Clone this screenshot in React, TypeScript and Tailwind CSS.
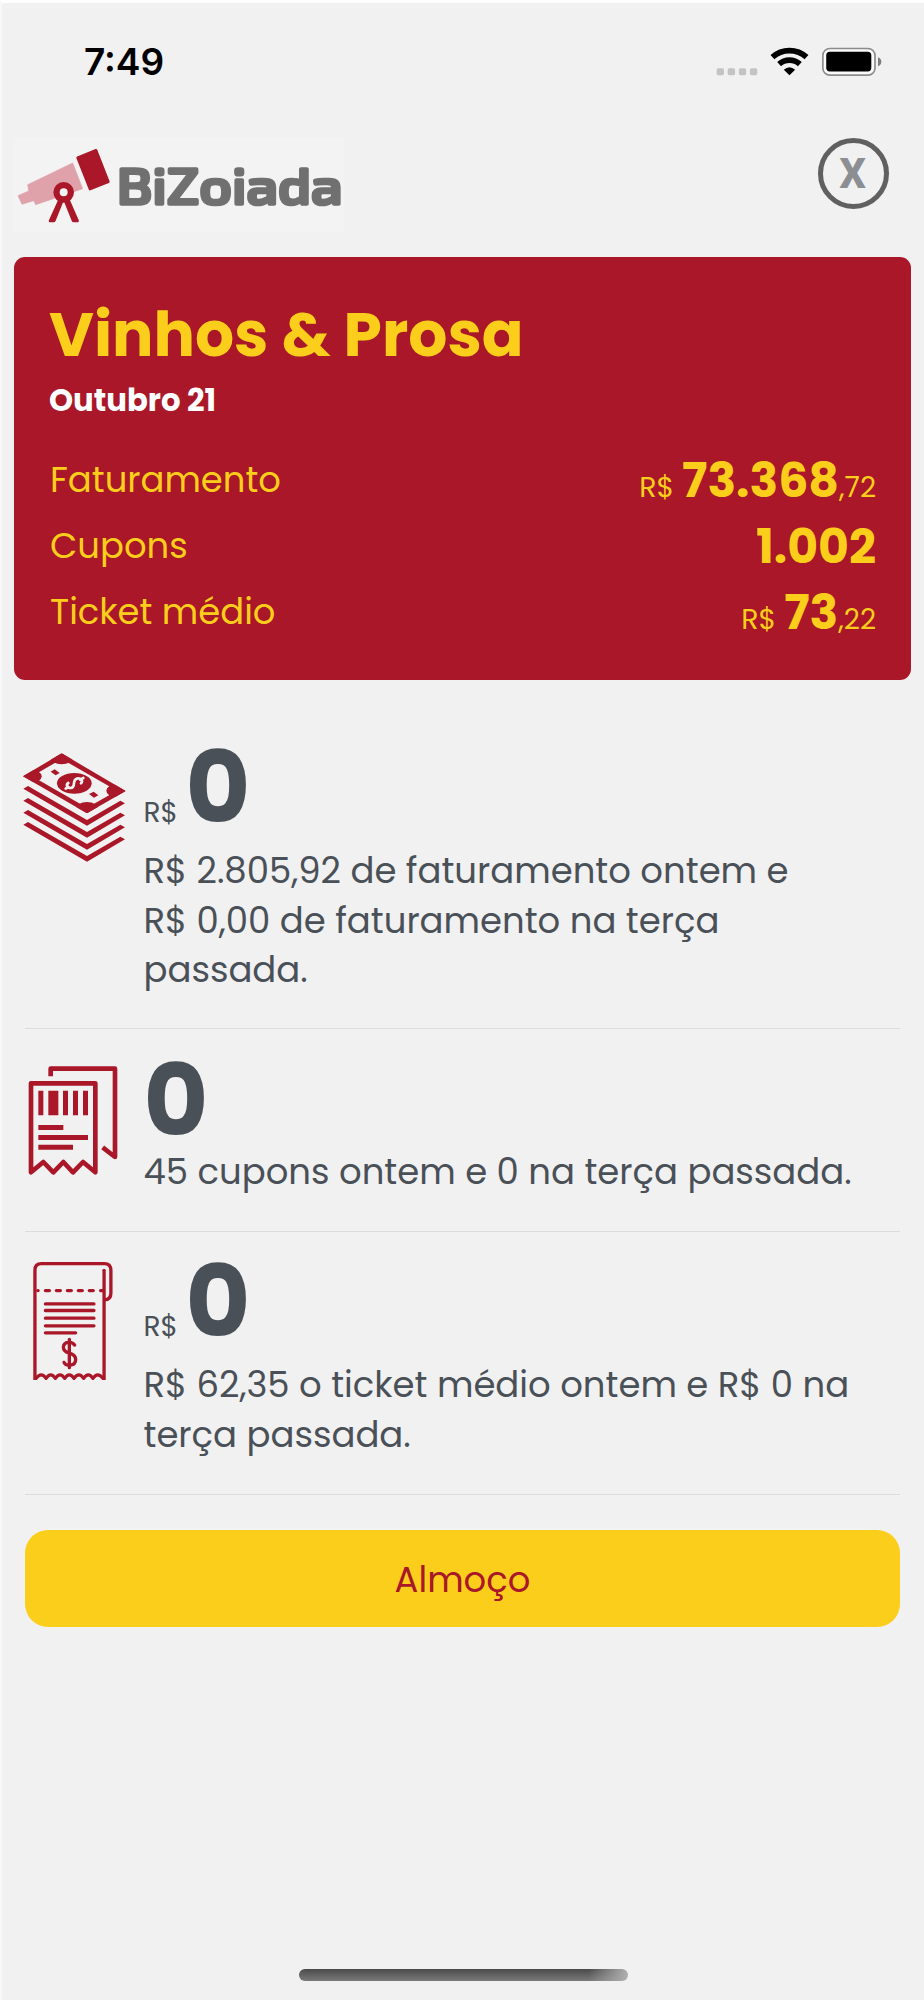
import type { ReactNode } from 'react';

const RED = '#a91729';
const PAGE = '#f1f1f1';

const Logo = () => (
  <svg viewBox="39 416 993 282" className="h-[94px] w-[331px] bg-[#f3f3f3]">
    {/* telescope */}
    <path
      d="M83 556 L218 491 L248 568 L107 616 L101 604 L66 615 L54 589 L86 575 Z"
      fill="#dfa2ab"
      stroke="#dfa2ab"
      strokeWidth="2"
      strokeLinejoin="round"
    />
    <path d="M233 475 L288 453 L325 547 L270 569 Z" fill={RED} stroke={RED} strokeWidth="8" strokeLinejoin="round" />
    <path
      d="M177 596 L146 664 Q146 669 150 669 H161 Q165 669 167 664 L191 604 L215 664 Q217 669 221 669 H232 Q238 669 236 662 L207 596 Z"
      fill={RED}
    />
    <circle cx="191" cy="579" r="21.5" fill="#f3f3f3" stroke={RED} strokeWidth="19" />
    {/* wordmark */}
    <text
      x="350"
      y="614"
      textLength="678"
      lengthAdjust="spacingAndGlyphs"
      className="font-['Exo_2',Inter,sans-serif] text-[149px] font-medium"
      fill="#707070"
      stroke="#707070"
      strokeWidth="11"
      strokeLinejoin="round"
    >
      BiZoiada
    </text>
  </svg>
);

const StatusIcons = () => (
  <svg viewBox="345 135 500 95" className="mb-[2px] h-[32px] w-[167px]">
    {/* signal */}
    {[350, 383, 416.5, 449.5].map((x) => (
      <rect key={x} x={x} y="204" width="22" height="21" rx="5" fill="#c3c3c3" />
    ))}
    {/* wifi */}
    <g fill="none" stroke="#000" strokeWidth="17">
      <path d="M517 171 A76 76 0 0 1 619 171" />
      <path d="M537 192 A46 46 0 0 1 599 192" />
    </g>
    <path d="M551 209 Q568 193 585 209 L568 225 Z" />
    {/* battery */}
    <rect x="668" y="145" width="156" height="80" rx="21" fill="#fafafa" stroke="#8c8c8c" strokeWidth="5" />
    <rect x="678" y="155" width="135" height="59" rx="11" />
    <path d="M833 171 Q843 175 843 184.500 Q843 194 833 198 Z" fill="#7d7d7d" />
  </svg>
);

const MoneyIcon = () => (
  <svg viewBox="68 98 309 327" className="mt-[17px] h-[109px] w-[103px]">
    <defs>
      <clipPath id="bill">
        <path d="M184 99 L376 212 L260 279 L68 168 Z" />
      </clipPath>
    </defs>
    <g clipPath="url(#bill)" fill={RED}>
      <rect x="68" y="98" width="309" height="182" />
      <path d="M184 116 L350 211 L260 262 L95 168 Z" fill={PAGE} />
      <ellipse cx="184" cy="111" rx="34" ry="21" />
      <ellipse cx="350" cy="211" rx="32" ry="20" />
      <ellipse cx="260" cy="266" rx="34" ry="21" />
      <ellipse cx="93" cy="168" rx="31" ry="19" />
      <ellipse cx="222" cy="189" rx="52" ry="31" />
      <path d="M151 154 L163 147 L178 158 L166 165 Z" />
      <path d="M266 221 L280 214 L294 225 L281 232 Z" />
    </g>
    <path
      d="M204 188 C196 193 200 203 211 203 C229 202 213 180 229 175 C242 172 249 182 242 189 M239 178 L249 173 M204 200 L196 205"
      fill="none"
      stroke={PAGE}
      strokeWidth="8"
      strokeLinecap="round"
    />
    {[0, 36, 72, 108].map((dy) => (
      <path
        key={dy}
        transform={`translate(0 ${dy})`}
        d="M69 205 L83 197 L260 299 L360 241 L374 249 L260 316 Z"
        fill={RED}
      />
    ))}
  </svg>
);

const CouponIcon = () => (
  <svg viewBox="84 140 270 327" className="ml-[5px] mt-[17px] h-[109px] w-[90px]">
    <g fill="none" stroke={RED} strokeWidth="14" strokeLinejoin="round">
      <path d="M93 459 V192 H286 V459 L249 428 L219 459 L190 428 L160 459 L130 428 Z" />
      <path d="M152 171 V148 H345 V413 L308 384" />
    </g>
    <path
      d="M115 214h15v74h-15z M145 214h30v74h-30z M189 214h15v74h-15z M219 214h15v74h-15z M249 214h15v74h-15z M115 317h75v15h-75z M115 347h149v15h-149z M115 376h104v15h-104z"
      fill={RED}
    />
  </svg>
);

const TicketIcon = () => (
  <svg viewBox="99 66 240 355" className="ml-[10px] mt-[12px] h-[118px] w-[80px]">
    <g fill="none" stroke={RED} strokeWidth="10" strokeLinecap="round" strokeLinejoin="round">
      <path d="M104.500 425 V91 Q104.500 71 124 71 H313 Q333 71 333 91 V160 Q333 179 314 180" />
      <path d="M312.500 91 V425" />
      <path d="M113 152h1 M136 152h12 M169 152h12 M202 152h12 M235 152h12 M268 152h12 M302 152h8" />
      <path d="M136 192H282 M136 212H282 M136 235H282 M136 258H282 M136 279H227" />
      <path d="M224 316 C217 304 191 304 190 322 C190 337 204 339 210 341 C222 345 227 350 227 359 C227 380 198 381 192 368 M208 299 V384" />
      <path d="M108 416 Q124 395 138 416 Q152 395 166 416 Q180 395 194 416 Q208 395 222 416 Q237 395 251 416 Q265 395 279 416 Q293 395 309 416" />
    </g>
  </svg>
);

interface SummaryRowProps {
  label: string;
  value: string;
  cents?: string;
}

const SummaryRow = ({ label, value, cents }: SummaryRowProps) => (
  <div className="flex h-[66px] items-center justify-between">
    <span className="pl-px pt-[2px] text-[35.400px]">{label}</span>
    <span className="flex items-baseline pt-[3px]">
      {cents && <span className="mr-[8px] text-[28.400px] leading-none">R$</span>}
      <span className="text-[47.400px] font-bold leading-[66px]">{value}</span>
      {cents && <span className="text-[28px] leading-none">{cents}</span>}
    </span>
  </div>
);

interface StatProps {
  icon: ReactNode;
  currency?: boolean;
  className: string;
  children: ReactNode;
}

const Stat = ({ icon, currency, className, children }: StatProps) => (
  <section className={`ml-[25px] mr-[24px] flex border-b border-[#dcdcdc] ${className}`}>
    <div className="-ml-[2px] w-[120.500px] shrink-0">{icon}</div>
    <div className="whitespace-nowrap text-[35.450px] leading-[49.700px]">
      <div className={`flex h-[98px] items-baseline ${currency ? 'mb-[12px]' : ''}`}>
        {currency && <span className="mr-[7.500px] text-[28px] leading-none">R$</span>}
        <span className="text-[99.500px] font-bold leading-[103px]">0</span>
      </div>
      {children}
    </div>
  </section>
);

const App = () => {
  return (
    <div className="flex h-[2000px] w-[924px] flex-col overflow-hidden border-l-2 border-l-[#f8f8f8] border-t-[3px] border-t-white bg-[#f1f1f1] font-[Poppins,Inter,sans-serif] text-[#495057]">
      <div className="-ml-[2px] flex grow flex-col">
        {/* Status bar */}
        <div className="flex h-[118px] items-center justify-between pl-[84px] pr-[42px]">
          <span className="font-[Inter,sans-serif] text-[37px] font-semibold text-black">7:49</span>
          <StatusIcons />
        </div>

        {/* Header */}
        <header className="mt-[17px] flex h-[94px] items-start justify-between pl-[13px] pr-[35px]">
          <Logo />
          <button className="flex size-[71px] items-center justify-center rounded-full border-[5px] border-[#606060] pr-[2px] font-[Roboto,sans-serif] text-[42px] font-extrabold text-[#8b8f94]">
            X
          </button>
        </header>

        {/* Monthly summary */}
        <div className="ml-[14px] mt-[25px] h-[423px] w-[897px] rounded-[11px] bg-[#a91729] px-[35px] pt-[48px] text-[#fcce1c]">
          <h1 className="text-[61.500px] font-bold leading-[60px]">Vinhos &amp; Prosa</h1>
          <p className="mt-[16px] text-[30.700px] font-bold leading-[40px] text-white">Outubro 21</p>
          <div className="mt-[25px]">
            <SummaryRow label="Faturamento" value="73.368" cents=",72" />
            <SummaryRow label="Cupons" value="1.002" />
            <SummaryRow label="Ticket médio" value="73" cents=",22" />
          </div>
        </div>

        {/* Today */}
        <Stat icon={<MoneyIcon />} currency className="h-[349px] pt-[56px]">
          <p>R$ 2.805,92 de faturamento ontem e</p>
          <p>R$ 0,00 de faturamento na terça</p>
          <p>passada.</p>
        </Stat>
        <Stat icon={<CouponIcon />} className="h-[203px] pt-[20px]">
          <p>45 cupons ontem e 0 na terça passada.</p>
        </Stat>
        <Stat icon={<TicketIcon />} currency className="h-[263px] pt-[18px]">
          <p>R$ 62,35 o ticket médio ontem e R$ 0 na</p>
          <p>terça passada.</p>
        </Stat>

        <button className="ml-[25px] mr-[24px] mt-[35px] h-[97px] rounded-[23px] bg-[#fcce1c] pt-[2px] text-[35.400px] text-[#a91729]">
          Almoço
        </button>

        {/* Home indicator */}
        <div className="mb-[19px] ml-[299px] mt-auto h-[12px] w-[329px] rounded-full bg-[linear-gradient(to_right,transparent_88%,#b0b0b0_100%),linear-gradient(to_bottom,#4a4a4a,#7a7a7a)]" />
      </div>
    </div>
  );
};

export default App;
